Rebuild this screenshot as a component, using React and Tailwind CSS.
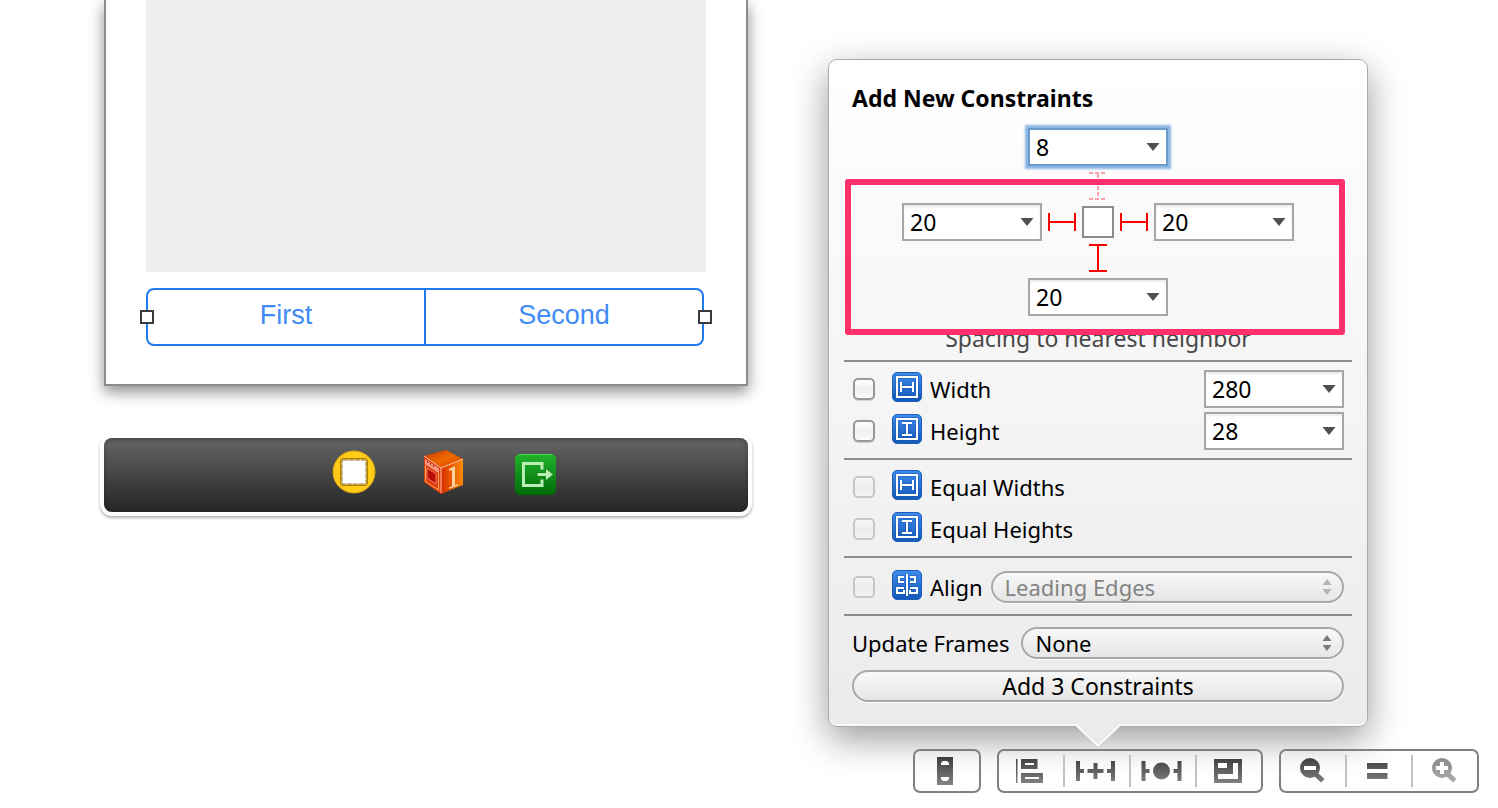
import { useState } from 'react';

function Combo({ label, value, focused }) {
  return (
    <div
      className={`flex items-center w-[140px] h-[38px] bg-white border-2 ${
        focused
          ? 'border-[#6a9bcb] shadow-[0_0_2px_3px_rgba(118,170,222,0.85)]'
          : 'border-[#a6a6a6] shadow-[inset_0_2px_2px_rgba(0,0,0,0.08)]'
      }`}
    >
      <input
        type="text"
        aria-label={label}
        defaultValue={value}
        className="flex-1 min-w-0 h-full pl-1.5 bg-transparent outline-none"
      />
      <button type="button" aria-label={`${label} presets`} className="w-[26px] h-full flex items-center justify-center">
        <svg width="14" height="8" viewBox="0 0 14 8">
          <path d="M0.5 0h13L7 8z" fill="#505050" />
        </svg>
      </button>
    </div>
  );
}

// Spacing strut, solid when the constraint is on
function Strut({ vertical, dashed }) {
  const stroke = dashed ? '#fba3ab' : '#fe0000';
  const dash = dashed ? '4 2' : undefined;
  return vertical ? (
    <svg width="18" height="28" viewBox="0 0 18 28" fill="none" stroke={stroke} strokeWidth="2" strokeDasharray={dash}>
      <path d="M0 1h18M9 2v24M0 27h18" />
    </svg>
  ) : (
    <svg width="28" height="18" viewBox="0 0 28 18" fill="none" stroke={stroke} strokeWidth="2" strokeDasharray={dash}>
      <path d="M1 0v18M2 9h24M27 0v18" />
    </svg>
  );
}

const GLYPHS = {
  width: 'M5 5h20v20H5zM9 10v10M21 10v10M9 15h12',
  height: 'M5 5h20v20H5zM10 9h10M10 21h10M15 9v12',
  align: 'M15 4v22M12 7H7v5h5M9 12h3M12 18H5v5h7v-3M18 7h5v5h-5M18 18h7v5h-7v-3',
};

function ConstraintIcon({ type }) {
  return (
    <svg className="shrink-0 mb-1" width="30" height="30" viewBox="0 0 30 30" fill="none">
      <defs>
        <linearGradient id={`blue-${type}`} x1="0" y1="0" x2="0" y2="1">
          <stop offset="0" stopColor="#3f8cec" />
          <stop offset="1" stopColor="#1458b9" />
        </linearGradient>
      </defs>
      <rect x="0.5" y="0.5" width="29" height="29" rx="4.5" fill={`url(#blue-${type})`} stroke="#1c5fbd" />
      <path d={GLYPHS[type]} stroke="#1452a8" strokeWidth="4" opacity="0.4" />
      <path d={GLYPHS[type]} stroke="#fff" strokeWidth="2" />
    </svg>
  );
}

function CheckRow({ label, icon, disabled, children }) {
  const [checked, setChecked] = useState(false);
  return (
    <div className="flex items-center px-2 h-[42px]">
      <label className={`flex items-center shrink-0 ${children ? 'mr-2' : ''}`}>
        <input
          type="checkbox"
          checked={checked}
          disabled={disabled}
          onChange={(e) => setChecked(e.target.checked)}
          className="appearance-none size-[22px] ml-px mr-[17px] rounded-[5px] border-2 border-[#999] bg-linear-to-b from-white via-[#f1f1f1] to-[#fafafa] shadow-[0_1px_1px_rgba(0,0,0,0.15)] checked:bg-[#6aa6ea] disabled:border-[#c6c6c6] disabled:from-[#f6f6f6] disabled:via-[#ededed] disabled:to-[#f3f3f3] disabled:shadow-none"
        />
        <ConstraintIcon type={icon} />
        <span className="ml-2 text-[22px]">{label}</span>
      </label>
      {children}
    </div>
  );
}

function PopUp({ id, label, options, disabled }) {
  return (
    <div className="relative flex-1 min-w-0">
      <select
        id={id}
        aria-label={label}
        disabled={disabled}
        className="block appearance-none w-full h-8 pl-3 pr-8 text-[22px] leading-7 rounded-full border-2 border-[#a8a8a8] bg-linear-to-b from-[#f8f8f8] to-[#e6e6e6] shadow-[0_1px_0_#fff] outline-none disabled:text-[#838383] disabled:opacity-100"
      >
        {options.map((o) => <option key={o}>{o}</option>)}
      </select>
      <svg
        className="absolute right-3 top-2 pointer-events-none"
        width="10"
        height="16"
        viewBox="0 0 10 16"
        fill={disabled ? '#b4b4b4' : '#7b7b7b'}
      >
        <path d="M5 0l4.5 6h-9zM5 16l4.5-6h-9z" />
      </svg>
    </div>
  );
}

function ConstraintsPopover() {
  return (
    <form
      onSubmit={(e) => e.preventDefault()}
      className="relative w-[540px] px-[15px] py-6 rounded-[9px] border border-[#aaa] bg-linear-to-b from-white to-[#ebebeb] shadow-[0_12px_36px_rgba(0,0,0,0.4),inset_0_-2px_0_#fafafa]"
    >
      <h2 className="px-2 leading-7 font-bold">Add New Constraints</h2>

      {/* Spacing */}
      <div className="flex flex-col items-center mt-4">
        <Combo label="Top spacing" value="8" focused />
        <div className="mt-1.5 mb-[3px]"><Strut vertical dashed /></div>
        <div className="flex items-center gap-1.5">
          <Combo label="Leading spacing" value="20" />
          <Strut />
          <div className="size-8 bg-white border-2 border-[#8b8b8b]" />
          <Strut />
          <Combo label="Trailing spacing" value="20" />
        </div>
        <div className="mt-[3px] mb-1.5"><Strut vertical /></div>
        <Combo label="Bottom spacing" value="20" />
        <p className="my-2 leading-7 text-[#484848]">Spacing to nearest neighbor</p>
      </div>
      <div className="absolute top-[119px] left-4 right-[22px] h-[156px] border-6 border-[#ff2f6c] rounded-[3px] pointer-events-none" />

      {/* Size */}
      <div className="border-t-2 border-[#8c8c8c] py-1.5">
        <CheckRow label="Width" icon="width">
          <div className="ml-auto"><Combo label="Width value" value="280" /></div>
        </CheckRow>
        <CheckRow label="Height" icon="height">
          <div className="ml-auto"><Combo label="Height value" value="28" /></div>
        </CheckRow>
      </div>

      <div className="border-t-2 border-[#8c8c8c] py-1.5">
        <CheckRow label="Equal Widths" icon="width" disabled />
        <CheckRow label="Equal Heights" icon="height" disabled />
      </div>

      <div className="border-t-2 border-[#8c8c8c] pt-2 pb-1.5">
        <CheckRow label="Align" icon="align" disabled>
          <PopUp label="Alignment" options={['Leading Edges']} disabled />
        </CheckRow>
      </div>

      <div className="border-t-2 border-[#8c8c8c] px-2 pt-[11px]">
        <div className="flex items-center gap-3">
          <label htmlFor="update-frames" className="text-[22px] leading-7">Update Frames</label>
          <PopUp id="update-frames" options={['None', 'Items of New Constraints', 'All Frames in Container']} />
        </div>
        <button
          type="submit"
          className="block w-full h-8 mt-[11px] leading-7 rounded-full border-2 border-[#a8a8a8] bg-linear-to-b from-[#f8f8f8] to-[#e6e6e6] shadow-[0_1px_0_#fff]"
        >
          Add 3 Constraints
        </button>
      </div>

      {/* Arrow */}
      <svg className="absolute top-full left-1/2 -translate-x-1/2 -mt-0.5" width="48" height="24" viewBox="0 0 48 24">
        <path d="M0 0h48L46 2 24 24 2 2z" fill="#ebebeb" />
        <path d="M1 1.5h1L24 23.5 46 1.5h1" fill="none" stroke="#999" />
        <path d="M1 0l23 22L47 0" fill="none" stroke="#fafafa" strokeWidth="2" />
      </svg>
    </form>
  );
}

function ToolButton({ label, disabled, children }) {
  return (
    <button type="button" aria-label={label} disabled={disabled} className="w-16 h-10">
      <svg
        width="64"
        height="40"
        viewBox="0 0 64 40"
        fill={disabled ? 'url(#tool-off)' : 'url(#tool-on)'}
        stroke="none"
      >
        {children}
      </svg>
    </button>
  );
}

function ToolGroup({ children }) {
  return <div className="flex items-center h-11 border-2 border-[#808080] rounded-[7px]">{children}</div>;
}

const Divider = () => <div className="w-0.5 h-8 bg-[#c2c2c2]" />;

function Toolbar() {
  return (
    <div className="relative flex gap-4">
      <svg className="absolute" width="0" height="0">
        <defs>
          <linearGradient id="tool-on" gradientUnits="userSpaceOnUse" x1="0" y1="6" x2="0" y2="34">
            <stop offset="0" stopColor="#3c3c3c" />
            <stop offset="1" stopColor="#858585" />
          </linearGradient>
          <linearGradient id="tool-off" gradientUnits="userSpaceOnUse" x1="0" y1="6" x2="0" y2="34">
            <stop offset="0" stopColor="#8a8a8a" />
            <stop offset="1" stopColor="#b0b0b0" />
          </linearGradient>
        </defs>
      </svg>

      <ToolGroup>
        <ToolButton label="Toggle form factor">
          <path d="M22 6h16v28H22z" />
          <path d="M28 10h4l2 2v2h-8v-2zM26 26h8v2l-2 2h-4l-2-2z" fill="#fff" />
        </ToolButton>
      </ToolGroup>

      <ToolGroup>
        <ToolButton label="Align">
          <path d="M17 8h1.5v24H17zM22 8h16.5v10H22zM22 22h22v10H22z" />
          <path d="M26 12h9v2h-9zM26 26h14v2H26z" fill="#fff" />
        </ToolButton>
        <Divider />
        <ToolButton label="Pin">
          <path d="M11 10h4v8h4v4h-4v8h-4zM50 10h-4v8h-4v4h4v8h4zM28.500 12h4v6h6v4h-6v6h-4v-6h-6v-4h6z" />
        </ToolButton>
        <Divider />
        <ToolButton label="Resolve auto layout issues">
          <path d="M10.500 10h4v8h4v4h-4v8h-4zM50.500 10h-4v8h-4v4h4v8h4z" />
          <circle cx="30.500" cy="20" r="8.500" />
        </ToolButton>
        <Divider />
        <ToolButton label="Resizing behavior">
          <path d="M17 8h28v24H17z" />
          <path d="M21 12h9v5H21zM36 12h5v16H21v-5h15z" fill="#fff" />
        </ToolButton>
      </ToolGroup>

      <ToolGroup>
        <ToolButton label="Zoom out">
          <circle cx="29" cy="17" r="10" />
          <path d="M33.500 25.500l3.500-3.500 6.500 6-3.500 3.500z" />
          <path d="M23 15h12v4H23z" fill="#fff" />
        </ToolButton>
        <Divider />
        <ToolButton label="Actual size">
          <path d="M20 12h20.500v6H20zM20 22h20.500v6H20z" />
        </ToolButton>
        <Divider />
        <ToolButton label="Zoom in" disabled>
          <circle cx="29" cy="17" r="10" />
          <path d="M33.500 25.500l3.500-3.500 6.500 6-3.500 3.500z" />
          <path d="M27 11h4v4h4v4h-4v4h-4v-4h-4v-4h4z" fill="#fff" />
        </ToolButton>
      </ToolGroup>
    </div>
  );
}

function Dock() {
  return (
    <div className="flex items-center justify-center gap-[47px] h-[74px] pl-[38px] rounded-lg bg-linear-to-b from-[#666] to-[#262626] shadow-[inset_0_2px_4px_rgba(0,0,0,0.3),0_0_0_4px_#fff,0_2px_3px_4px_rgba(0,0,0,0.3)]">
      <button type="button" aria-label="View controller" className="mb-1.5">
        <svg width="44" height="44" viewBox="0 0 44 44" fill="none">
          <circle cx="22" cy="22" r="21" fill="#ffcd17" stroke="#e0a80c" />
          <rect x="8.500" y="8.500" width="27" height="27" rx="2.500" fill="#f3c53a" stroke="#a87e0c" />
          <rect x="10" y="10" width="24" height="24" rx="1" fill="#fff" stroke="#8d7638" strokeWidth="1" strokeDasharray="5 1" />
        </svg>
      </button>
      <button type="button" aria-label="First responder" className="mb-1.5">
        <svg width="44" height="44" viewBox="0 0 44 44">
          <defs>
            <linearGradient id="cube-right" x1="0" y1="0" x2="1" y2="0">
              <stop offset="0" stopColor="#d52d00" />
              <stop offset="1" stopColor="#ff8a00" />
            </linearGradient>
            <linearGradient id="cube-top" x1="0" y1="0" x2="1" y2="1">
              <stop offset="0" stopColor="#c93000" />
              <stop offset="0.500" stopColor="#ee6a00" />
              <stop offset="1" stopColor="#dc3b00" />
            </linearGradient>
          </defs>
          <path d="M1 6L23 0l17 9-22 9z" fill="url(#cube-top)" />
          <path d="M1 6l17 12v26L1 32z" fill="#e0380d" />
          <path d="M18 18l22-9v26l-22 9z" fill="url(#cube-right)" />
          <path d="M2 9l14 9.500v5L2 14z" fill="#f39a83" />
          <path d="M4 18l9 6v10l-9-6z" fill="#b90d06" stroke="#f3826a" />
          <path d="M2.500 15v16.500l13 8.500V23" fill="none" stroke="#ffb052" />
          <path d="M1 6l17 12v25M18 18l22-9" fill="none" stroke="#ffc3a0" />
          <path d="M4 12h1M7 14h1M10 16h1" stroke="#c62b12" strokeWidth="2" />
          <path d="M26 19l6-3v19l3-1v1.500l-9 3.500v-1.500l3-1.200V20l-3 1z" fill="#ffd0a0" />
        </svg>
      </button>
      <button type="button" aria-label="Exit" className="mb-0.5">
        <svg width="44" height="44" viewBox="0 0 44 44" fill="none">
          <defs>
            <linearGradient id="exit-green" x1="0" y1="0" x2="0" y2="1">
              <stop offset="0" stopColor="#22b32c" />
              <stop offset="1" stopColor="#006a08" />
            </linearGradient>
          </defs>
          <rect x="1" y="2" width="41" height="41" rx="5" fill="url(#exit-green)" />
          <path d="M5 2.500h33" stroke="#45dc4b" />
          <path d="M28 17.500v-6H9.500v22H28v-6" stroke="#b9edb4" strokeWidth="3" />
          <path d="M23 20.500h8.500V16l8 6.500-8 6.500v-4.500H23z" fill="#b9edb4" stroke="#0b8415" />
        </svg>
      </button>
    </div>
  );
}

function Handle({ className }) {
  return <span className={`absolute top-1/2 -translate-y-1/2 size-3.5 bg-white border-2 border-[#3a3a3a] ${className}`} />;
}

function Canvas() {
  return (
    <main className="flex-1 min-w-[400px]">
      <div className="px-10 pb-[38px] border-2 border-t-0 border-[#8b8b8b] bg-white shadow-[0_6px_14px_rgba(0,0,0,0.45)]">
        <div className="h-[272px] bg-[#efefef]" />
        <div className="relative flex h-[58px] mt-4 mr-0.5 border-2 border-[#1d7af0] rounded-lg font-['Liberation_Sans',Arial,sans-serif] text-[27px] text-[#3f8bf3]">
          <button type="button" className="flex-1 pb-1 border-r-2 border-[#1d7af0]">First</button>
          <button type="button" className="flex-1 pb-1">Second</button>
          <Handle className="-left-2" />
          <Handle className="-right-2.5" />
        </div>
      </div>
      <div className="mt-[52px]">
        <Dock />
      </div>
    </main>
  );
}

export default function App() {
  return (
    <div className="flex gap-20 min-h-screen pl-[104px] overflow-hidden bg-white text-black font-['Noto_Sans','Lucida_Grande',sans-serif] text-[23px]">
      <Canvas />
      <aside className="shrink-0 w-[670px] pt-[59px] flex flex-col">
        <ConstraintsPopover />
        <div className="self-end mt-[22px] mr-[19px]">
          <Toolbar />
        </div>
      </aside>
    </div>
  );
}
